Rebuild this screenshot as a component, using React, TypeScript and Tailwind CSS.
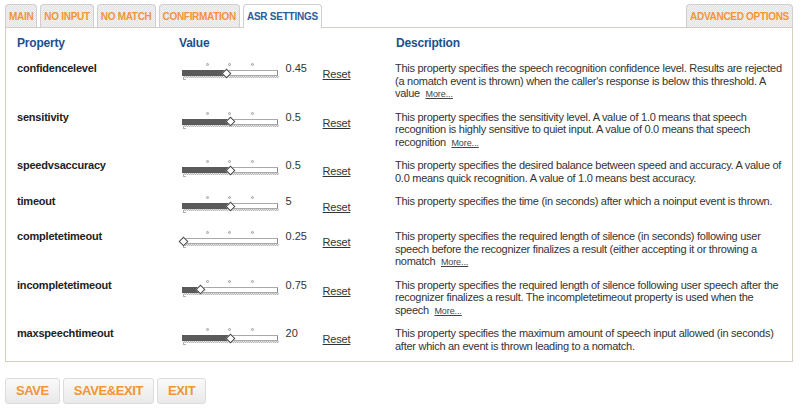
import React from "react";

type Row = { name: string; val: string; pos: number; desc: string; more?: boolean };

const rows: Row[] = [
  {
    name: "confidencelevel",
    val: "0.45",
    pos: 45,
    desc: "This property specifies the speech recognition confidence level. Results are rejected (a nomatch event is thrown) when the caller's response is below this threshold. A value",
    more: true,
  },
  {
    name: "sensitivity",
    val: "0.5",
    pos: 49,
    desc: "This property specifies the sensitivity level. A value of 1.0 means that speech recognition is highly sensitive to quiet input. A value of 0.0 means that speech recognition",
    more: true,
  },
  {
    name: "speedvsaccuracy",
    val: "0.5",
    pos: 49,
    desc: "This property specifies the desired balance between speed and accuracy. A value of 0.0 means quick recognition. A value of 1.0 means best accuracy.",
  },
  {
    name: "timeout",
    val: "5",
    pos: 49,
    desc: "This property specifies the time (in seconds) after which a noinput event is thrown.",
  },
  {
    name: "completetimeout",
    val: "0.25",
    pos: 2,
    desc: "This property specifies the required length of silence (in seconds) following user speech before the recognizer finalizes a result (either accepting it or throwing a nomatch",
    more: true,
  },
  {
    name: "incompletetimeout",
    val: "0.75",
    pos: 19,
    desc: "This property specifies the required length of silence following user speech after the recognizer finalizes a result. The incompletetimeout property is used when the speech",
    more: true,
  },
  {
    name: "maxspeechtimeout",
    val: "20",
    pos: 49,
    desc: "This property specifies the maximum amount of speech input allowed (in seconds) after which an event is thrown leading to a nomatch.",
  },
];

function Slider({ pos }: { pos: number }) {
  return (
    <div className="relative w-[98px] h-[20px] shrink-0">
      <span className="absolute top-px left-[24px] w-[3px] h-[3px] rounded-full border border-[#a0a0a0] bg-[#e8e8e8]" />
      <span className="absolute top-px left-[46px] w-[3px] h-[3px] rounded-full border border-[#a0a0a0] bg-[#e8e8e8]" />
      <span className="absolute top-px left-[69px] w-[3px] h-[3px] rounded-full border border-[#a0a0a0] bg-[#e8e8e8]" />
      <div className="absolute top-[8px] left-0 w-[96px] h-[6px] border border-[#a9a9a9] border-r-[#8a8a8a] bg-white" />
      <div className="absolute top-[8px] left-0 h-[6px] bg-[#5a5a5a]" style={{ width: pos }} />
      <div className="absolute top-[14px] left-[1px] w-[96px] h-[2px] bg-[image:repeating-conic-gradient(#b8b8b8_0%_25%,#e6e6e6_0%_50%)] bg-[length:2px_2px]" />
      <div className="absolute top-[15px] left-[1px] w-[3px] h-[3px] border-l border-b border-[#b0b0b0]" />
      <div
        className="absolute top-[7.5px] w-[7px] h-[7px] rotate-45 border border-[#4a4a4a] bg-white"
        style={{ left: pos - 4 }}
      />
    </div>
  );
}

function Tab({ label, active }: { label: string; active?: boolean }) {
  return (
    <div
      className={
        active
          ? "relative z-10 h-[24px] -mb-px px-[3px] pt-[6px] border border-b-0 border-[#cfcfcf] rounded-t-[4px] bg-white text-[10px] leading-[12px] font-bold text-[#2d5c9a] tracking-[-0.25px]"
          : "h-[23px] px-[3px] pt-[6px] border border-b-0 border-[#cfcfcf] rounded-t-[4px] bg-[image:repeating-conic-gradient(#e2e2e2_0%_25%,#f3f3f3_0%_50%)] bg-[length:2px_2px] text-[10px] leading-[12px] font-bold text-[#f4943a] tracking-[-0.3px]"
      }
    >
      {label}
    </div>
  );
}

export default function App() {
  return (
    <div className="w-[800px] h-[412px] bg-white font-['Liberation_Sans',Arial,sans-serif] text-[#333]">
      <div className="pt-[4px] pl-[5px]">
        <div className="flex items-end w-[788px] justify-between">
          <div className="flex items-end gap-[3px]">
            <Tab label="MAIN" />
            <Tab label="NO INPUT" />
            <Tab label="NO MATCH" />
            <Tab label="CONFIRMATION" />
            <Tab label="ASR SETTINGS" active />
          </div>
          <Tab label="ADVANCED OPTIONS" />
        </div>
        <div className="w-[788px] h-[335px] border border-[#d6cfbe] pl-[11px] pt-[8px]">
          <div className="flex text-[12px] leading-[14px] font-bold text-[#1e4f8e] mb-[11px] tracking-[-0.2px]">
            <div className="w-[162px]">Property</div>
            <div className="w-[217px]">Value</div>
            <div>Description</div>
          </div>
          {rows.map((r) => (
            <div key={r.name} className="flex items-start pb-[10px] min-h-[35px]">
              <div className="w-[162px] text-[11px] leading-[12.5px] font-bold text-[#222] pt-[1px] tracking-[-0.2px]">{r.name}</div>
              <div className="w-[217px] flex items-start">
                <div className="ml-[3px] mt-[1px]">
                  <Slider pos={r.pos} />
                </div>
                <div className="ml-[6px] w-[37px] text-[11px] leading-[12.5px] pt-[1px] text-[#333]">{r.val}</div>
                <div className="mt-[7px] text-[11px] leading-[12.5px] underline text-[#333] tracking-[-0.2px]">Reset</div>
              </div>
              <div className="w-[398px] text-[11px] leading-[12.5px] pt-[1px] text-[#333] tracking-[-0.27px]">
                {r.desc}
                {r.more && (
                  <>
                    {"\u00a0\u00a0"}
                    <span className="text-[9px] leading-[8px] underline text-[#444] tracking-[-0.1px]">More...</span>
                  </>
                )}
              </div>
            </div>
          ))}
        </div>
        <div className="flex gap-[3px] mt-[16px]">
          {["SAVE", "SAVE&EXIT", "EXIT"].map((b) => (
            <div
              key={b}
              className="h-[26px] px-[10px] flex items-center border border-[#dcdcdc] rounded-[3px] bg-gradient-to-b from-[#fafafa] to-[#e9e9e9] text-[13px] font-bold text-[#f39532] tracking-[-0.4px]"
            >
              {b}
            </div>
          ))}
        </div>
      </div>
    </div>
  );
}
